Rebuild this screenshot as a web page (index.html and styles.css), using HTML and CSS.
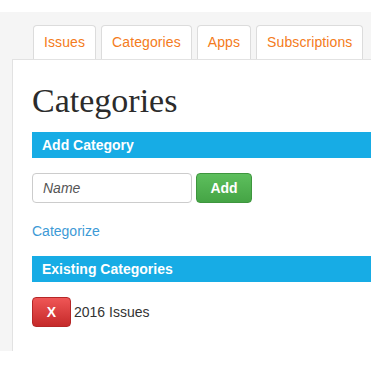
FILE: index.html
```html
<!DOCTYPE html>
<html lang="en">
<head>
    <meta charset="UTF-8">
    <meta name="viewport" content="width=device-width, initial-scale=1.0">
    <title>Categories</title>
    <link rel="stylesheet" href="styles.css">
</head>
<body>
    <div class="page">
        <!-- Tabs -->
        <ul class="tabs">
            <li><a href="#">Issues</a></li>
            <li class="active"><a href="#">Categories</a></li>
            <li><a href="#">Apps</a></li>
            <li><a href="#">Subscriptions</a></li>
        </ul>

        <div class="panel">
            <h1>Categories</h1>

            <div class="bar">Add Category</div>
            <form class="add-form">
                <input type="text" placeholder="Name">
                <button type="submit" class="btn btn-green">Add</button>
            </form>

            <a class="link" href="#">Categorize</a>

            <div class="bar">Existing Categories</div>
            <div class="cat-row">
                <button class="btn btn-red">X</button>
                <span>2016 Issues</span>
            </div>
        </div>
    </div>
</body>
</html>
```

FILE: styles.css
```css
html, body { margin: 0; padding: 0; background: #fff; }
body { font-family: "Liberation Sans", Arial, sans-serif; font-size: 14px; color: #333; }
.page { margin-top: 12px; background: #f5f5f5; padding: 13px 0 0 12px; }
.tabs { list-style: none; margin: 0 0 0 21px; padding: 0; display: flex; gap: 5px; }
.tabs li { background: #fff; border: 1px solid #dcdcdc; border-bottom: none; border-radius: 4px 4px 0 0; }
.tabs a { display: block; padding: 0 10px; height: 33px; line-height: 33px; color: #f47b20; text-decoration: none; letter-spacing: 0.1px; }
.panel { background: #fff; border-top: 1px solid #e2e2e2; border-left: 1px solid #e2e2e2; padding: 0 0 24px 19px; }
h1 { font-family: "Liberation Serif", Georgia, serif; font-weight: normal; font-size: 34px; line-height: 40px; margin: 21px 0 11px 0; color: #2b2b2b; }
.bar { background: #17ace5; color: #fff; font-weight: bold; height: 26px; line-height: 26px; padding-left: 10px; }
.add-form { display: flex; gap: 4px; margin: 15px 0 18px 0; }
.add-form input { width: 160px; height: 30px; box-sizing: border-box; border: 1px solid #ccc; border-radius: 4px; padding: 0 10px; font-family: inherit; font-size: 14px; font-style: italic; }
.add-form input::placeholder { color: #555; }
.btn { height: 30px; box-sizing: border-box; border-radius: 4px; color: #fff; font-family: inherit; font-weight: bold; font-size: 14px; padding: 0; cursor: pointer; }
.btn-green { width: 56px; background: linear-gradient(#5dbf5d, #45a445); border: 1px solid #3e963e; }
.btn-red { width: 39px; background: linear-gradient(#ef5656, #c52a2a); border: 1px solid #b52727; }
.link { display: block; color: #3d9ad6; text-decoration: none; line-height: 20px; margin-bottom: 15px; }
.cat-row { display: flex; align-items: center; gap: 3px; margin-top: 15px; }
```
